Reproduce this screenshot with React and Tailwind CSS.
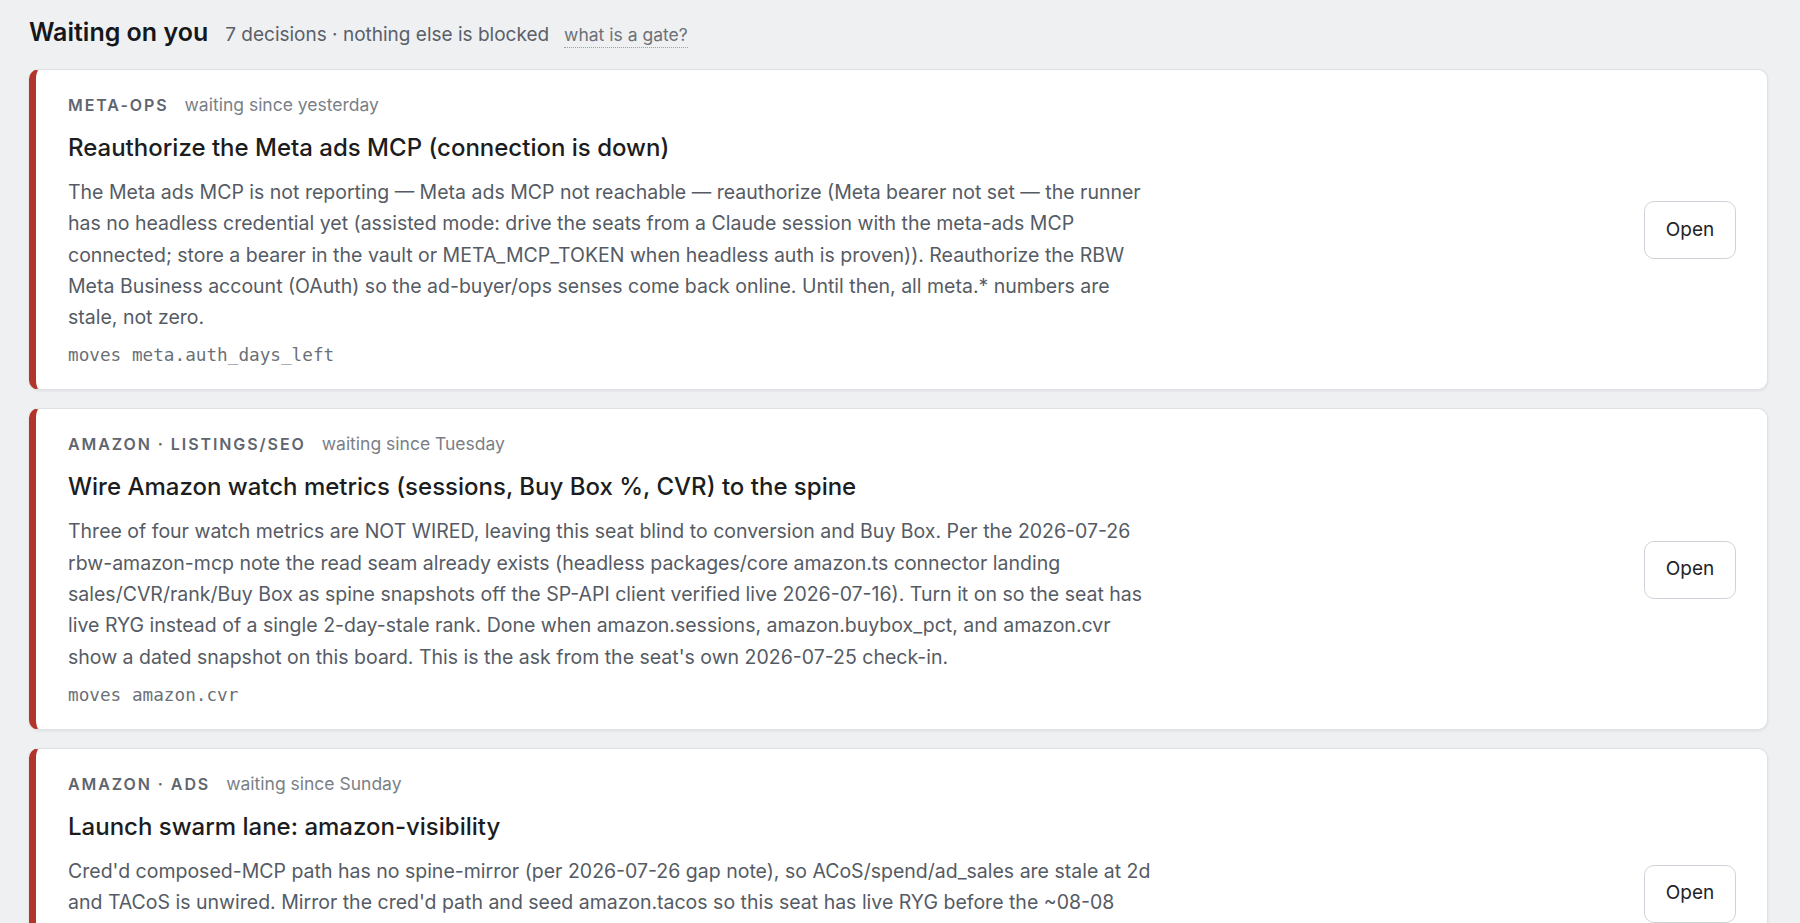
import React from "react";

const cards = [
  {
    label: "META-OPS",
    since: "waiting since yesterday",
    title: "Reauthorize the Meta ads MCP (connection is down)",
    body:
      "The Meta ads MCP is not reporting — Meta ads MCP not reachable — reauthorize (Meta bearer not set — the runner has no headless credential yet (assisted mode: drive the seats from a Claude session with the meta-ads MCP connected; store a bearer in the vault or META_MCP_TOKEN when headless auth is proven)). Reauthorize the RBW Meta Business account (OAuth) so the ad-buyer/ops senses come back online. Until then, all meta.* numbers are stale, not zero.",
    moves: "moves meta.auth_days_left",
  },
  {
    label: "AMAZON · LISTINGS/SEO",
    since: "waiting since Tuesday",
    title: "Wire Amazon watch metrics (sessions, Buy Box %, CVR) to the spine",
    body:
      "Three of four watch metrics are NOT WIRED, leaving this seat blind to conversion and Buy Box. Per the 2026-07-26 rbw-amazon-mcp note the read seam already exists (headless packages/core amazon.ts connector landing sales/CVR/rank/Buy Box as spine snapshots off the SP-API client verified live 2026-07-16). Turn it on so the seat has live RYG instead of a single 2-day-stale rank. Done when amazon.sessions, amazon.buybox_pct, and amazon.cvr show a dated snapshot on this board. This is the ask from the seat's own 2026-07-25 check-in.",
    moves: "moves amazon.cvr",
  },
  {
    label: "AMAZON · ADS",
    since: "waiting since Sunday",
    title: "Launch swarm lane: amazon-visibility",
    body:
      "Cred'd composed-MCP path has no spine-mirror (per 2026-07-26 gap note), so ACoS/spend/ad_sales are stale at 2d and TACoS is unwired. Mirror the cred'd path and seed amazon.tacos so this seat has live RYG before the ~08-08 cutover. Done when amazon.acos, amazon.spend, amazon.ad_sales and amazon.tacos each carry a same-day snapshot on this board, and the lane has reported green through one full daily cycle.",
    moves: "moves amazon.tacos",
  },
];

function Card({ c }) {
  return (
    <div className="flex items-center rounded-[10px] border border-[#dfe1e5] border-l-[7px] border-l-[#b1352a] bg-white pl-[32px] pr-[31px] pt-[23px] pb-[22px] shadow-[0_1px_3px_rgba(0,0,0,0.08)]">
      <div className="min-w-0 flex-1">
        <div className="flex h-6 items-baseline gap-[16px] leading-6">
          <span className="text-[16px] font-semibold tracking-[0.12em] text-[#5f656e]">{c.label}</span>
          <span className="text-[17.5px] text-[#7a7f87]">{c.since}</span>
        </div>
        <h2 className="mt-[16px] text-[24px] font-medium leading-[30px] text-[#1b1d21]">{c.title}</h2>
        <p className="mt-[14px] max-w-[1085px] text-[19.5px] leading-[31.3px] text-[#555b64]">{c.body}</p>
        <div className="mt-[10px] font-['DejaVu_Sans_Mono',monospace] text-[17.7px] leading-6 text-[#6b7078]">{c.moves}</div>
      </div>
      <button className="ml-8 h-[58px] w-[92px] shrink-0 rounded-[10px] border border-[#cfd3d9] bg-white text-[19px] text-[#1f2226]">
        Open
      </button>
    </div>
  );
}

export default function App() {
  return (
    <div className="min-h-screen bg-[#eff0f2] pl-[29px] pr-[32px] pt-[16px] pb-8 font-['Inter',sans-serif]">
      <div className="mb-[21px] flex h-8 items-baseline leading-8">
        <h1 className="text-[25px] font-semibold text-[#15171a]">Waiting on you</h1>
        <span className="ml-[17px] text-[19px] text-[#5a6068]">7 decisions · nothing else is blocked</span>
        <span className="ml-[15px] border-b border-dotted border-[#9aa0a8] text-[17.5px] leading-6 text-[#6b7078]">what is a gate?</span>
      </div>
      <div className="flex flex-col gap-[18px]">
        {cards.map((c) => (
          <Card key={c.title} c={c} />
        ))}
      </div>
    </div>
  );
}
